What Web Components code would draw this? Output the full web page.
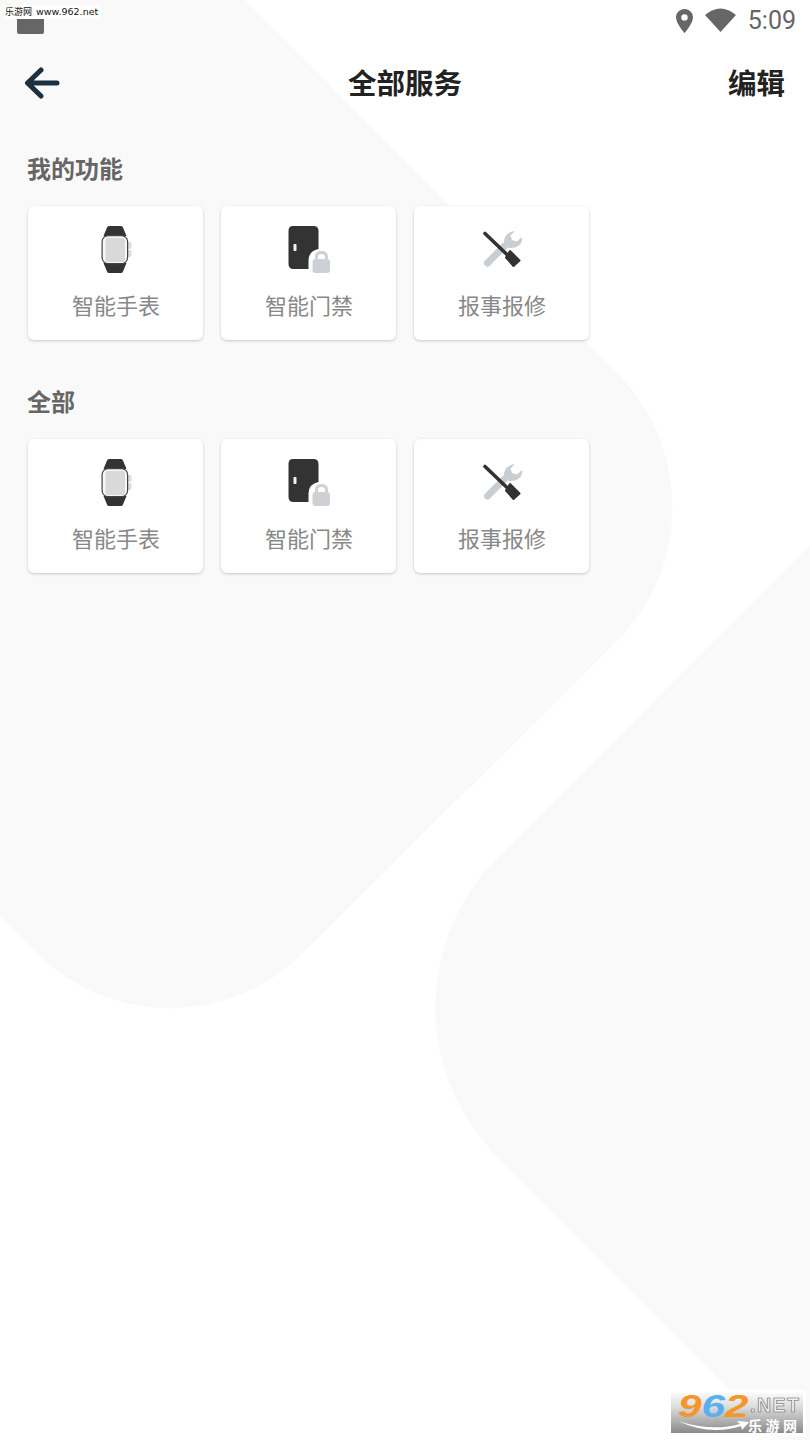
<!DOCTYPE html>
<html lang="zh">
<head>
<meta charset="utf-8">
<title>全部服务</title>
<style>
html, body {
	margin: 0;
	padding: 0;
	background: #fff;
}
body {
	font-family: "Noto Sans CJK SC", "Noto Sans", sans-serif;
}
</style>
</head>
<body>
<service-page>
	<status-bar></status-bar>
	<nav-header title="全部服务" action="编辑"></nav-header>
	<service-section heading="我的功能">
		<service-card icon="watch" label="智能手表"></service-card>
		<service-card icon="door" label="智能门禁"></service-card>
		<service-card icon="tools" label="报事报修"></service-card>
	</service-section>
	<service-section heading="全部">
		<service-card icon="watch" label="智能手表"></service-card>
		<service-card icon="door" label="智能门禁"></service-card>
		<service-card icon="tools" label="报事报修"></service-card>
	</service-section>
	<site-badge></site-badge>
</service-page>

<script>
const ICONS = {
	watch: `<svg width="36" height="48" viewBox="0 0 36 48">
		<path d="M5.500 11 L9 2.500 Q9.500 1 11 1 H23 Q24.500 1 25 2.500 L28.500 11 Z M5.500 38 H28.500 L25 46.500 Q24.500 48 23 48 H11 Q9.500 48 9 46.500 Z" fill="#333"/>
		<rect x="29" y="17" width="4.500" height="7" rx="1.800" fill="#ddd"/>
		<rect x="29" y="25" width="4.500" height="7" rx="1.800" fill="#ddd"/>
		<rect x="4.100" y="10.600" width="25.500" height="28" rx="6" fill="#f6f6f6" stroke="#444" stroke-width="1.200"/>
		<rect x="7.500" y="13" width="19.500" height="24" rx="2" fill="#d9d9d9"/>
	</svg>`,
	door: `<svg width="44" height="48" viewBox="0 0 44 48">
		<g transform="translate(0 1)">
			<path d="M6 0 H26.500 Q31.500 0 31.500 5 V23 Q21.500 25 21.500 34.500 V43 H6.500 Q1.500 43 1.500 38 V5 Q1.500 0 6 0 Z" fill="#333"/>
			<rect x="6.500" y="18" width="3" height="7" rx="0.800" fill="#f2f2f2"/>
			<path d="M29.500 36 V31 Q29.500 26.500 34.500 26.500 Q39.500 26.500 39.500 31 V36" fill="none" stroke="#cdd1d5" stroke-width="3"/>
			<rect x="25.500" y="33" width="17.500" height="14" rx="3" fill="#cdd1d5"/>
		</g>
	</svg>`,
	tools: `<svg width="44" height="40" viewBox="-2 0 44 40">
		<path d="M5.500 34 L22 17.500" stroke="#c9ced3" stroke-width="7" stroke-linecap="round"/>
		<path d="M22 17 Q21 7 27 4 Q29 2.500 33 2 L28.500 6.500 L30 11 L35 12.500 L40 8 Q41 13 37 16.500 Q33 19.500 27 19 Z" fill="#c9ced3"/>
		<path d="M3 4.500 L25.500 26" stroke="#333" stroke-width="3.600" stroke-linecap="round"/>
		<path d="M28 22 L37.500 31.500 L31.500 37 L24 28.500 Z" fill="#333" stroke="#333" stroke-width="2" stroke-linejoin="round"/>
	</svg>`
};

const pageTemplate = document.createElement('template');
pageTemplate.innerHTML = `
<style>
:host {
	display: block;
	position: relative;
	width: 810px;
	height: 1440px;
	overflow: hidden;
	background: #fff;
}
.shapes {
	position: absolute;
	left: 0;
	top: 0;
}
.content {
	position: relative;
	display: flex;
	flex-direction: column;
	height: 100%;
}
</style>
<svg class="shapes" width="810" height="1440" viewBox="0 0 810 1440">
	<path d="M0 0 H245 L617 373 A190 190 0 0 1 617 641 L303 953 A188 188 0 0 1 37 953 L0 916 Z" fill="#f9f9f9"/>
	<path d="M810 545 L497 858.500 A211 211 0 0 0 497 1156.500 L810 1470 Z" fill="#f9f9f9"/>
</svg>
<div class="content"><slot></slot></div>
`;

class ServicePage extends HTMLElement {
	constructor() {
		super();
		this.attachShadow({ mode: 'open' });
		this.shadowRoot.appendChild(pageTemplate.content.cloneNode(true));
	}
}

const statusTemplate = document.createElement('template');
statusTemplate.innerHTML = `
<style>
:host {
	display: flex;
	position: relative;
	height: 42px;
	align-items: center;
	justify-content: flex-end;
	padding: 0 14px 0 0;
	color: #666;
	font-family: Roboto, "Liberation Sans", sans-serif;
}
.stamp {
	position: absolute;
	left: 4px;
	top: 5px;
	width: 96px;
	height: 14px;
	padding-left: 1px;
	background: #fff;
	color: #111;
	font: 9.500px/14px "DejaVu Sans", sans-serif;
	white-space: nowrap;
}
.stamp span {
	margin-right: 4px;
	font: 9px/14px "Noto Sans CJK SC", sans-serif;
}
.notch {
	position: absolute;
	left: 17px;
	top: 19px;
	width: 27px;
	height: 15px;
	background: #666;
	border-radius: 0 0 2px 2px;
}
.pin {
	margin-right: 12px;
}
.wifi {
	margin-right: 12px;
	margin-top: -2px;
}
.time {
	font-size: 25px;
	line-height: 44px;
}
</style>
<div class="notch"></div>
<div class="stamp"><span>乐游网</span>www.962.net</div>
<svg class="pin" width="17" height="24" viewBox="0 0 17 24">
	<path fill-rule="evenodd" d="M8.500 0 C3.800 0 0 3.700 0 8.400 C0 14.200 8.500 24 8.500 24 C8.500 24 17 14.200 17 8.400 C17 3.700 13.200 0 8.500 0 Z M8.500 5.200 A3.200 3.200 0 1 1 8.500 11.600 A3.200 3.200 0 1 1 8.500 5.200 Z" fill="#666"/>
</svg>
<svg class="wifi" width="31" height="24" viewBox="0 0 31 24">
	<path d="M0 7 Q15.500 -6 31 7 L15.500 24 Z" fill="#666"/>
</svg>
<span class="time">5:09</span>
`;

class StatusBar extends HTMLElement {
	constructor() {
		super();
		this.attachShadow({ mode: 'open' });
		this.shadowRoot.appendChild(statusTemplate.content.cloneNode(true));
	}
}

const headerTemplate = document.createElement('template');
headerTemplate.innerHTML = `
<style>
:host {
	display: grid;
	grid-template-columns: 1fr auto 1fr;
	align-items: center;
	height: 82px;
	padding: 0 25px;
	color: #222;
	font-size: 28.500px;
	font-weight: 700;
}
.title, .action {
	padding-bottom: 4px;
}
.action {
	text-align: right;
}
svg {
	display: block;
}
</style>
<svg width="36" height="34" viewBox="0 0 36 34">
	<path d="M32 17 H3 M16 4 L2.500 17 L16 30" fill="none" stroke="#1c3040" stroke-width="5" stroke-linecap="round" stroke-linejoin="round"/>
</svg>
<span class="title"></span>
<span class="action"></span>
`;

class NavHeader extends HTMLElement {
	constructor() {
		super();
		this.attachShadow({ mode: 'open' });
		this.shadowRoot.appendChild(headerTemplate.content.cloneNode(true));
		this.shadowRoot.querySelector('.title').textContent = this.getAttribute('title');
		this.shadowRoot.querySelector('.action').textContent = this.getAttribute('action');
	}
}

const sectionTemplate = document.createElement('template');
sectionTemplate.innerHTML = `
<style>
:host {
	display: block;
	padding: 24px 28px 17px 27px;
}
h2 {
	margin: 0 0 18px;
	font-size: 24px;
	line-height: 40px;
	font-weight: 700;
	color: #666;
}
.grid {
	display: grid;
	grid-template-columns: repeat(3, 175px);
	gap: 18px;
	padding-left: 1px;
}
</style>
<h2></h2>
<div class="grid"><slot></slot></div>
`;

class ServiceSection extends HTMLElement {
	constructor() {
		super();
		this.attachShadow({ mode: 'open' });
		this.shadowRoot.appendChild(sectionTemplate.content.cloneNode(true));
		this.shadowRoot.querySelector('h2').textContent = this.getAttribute('heading');
	}
}

const cardTemplate = document.createElement('template');
cardTemplate.innerHTML = `
<style>
:host {
	display: flex;
	flex-direction: column;
	align-items: center;
	height: 134px;
	box-sizing: border-box;
	padding-top: 19px;
	background: #fff;
	border-radius: 6px;
	box-shadow: 0 1px 3px rgba(0, 0, 0, 0.2);
}
.icon {
	display: flex;
	align-items: center;
	justify-content: center;
	height: 48px;
}
svg {
	display: block;
}
.label {
	margin-top: 13px;
	padding-left: 1px;
	font-size: 22px;
	line-height: 36px;
	color: #888;
}
</style>
<div class="icon"></div>
<div class="label"></div>
`;

class ServiceCard extends HTMLElement {
	constructor() {
		super();
		this.attachShadow({ mode: 'open' });
		this.shadowRoot.appendChild(cardTemplate.content.cloneNode(true));
		this.shadowRoot.querySelector('.icon').innerHTML = ICONS[this.getAttribute('icon')];
		this.shadowRoot.querySelector('.label').textContent = this.getAttribute('label');
	}
}

const badgeTemplate = document.createElement('template');
badgeTemplate.innerHTML = `
<style>
:host {
	position: absolute;
	left: 671px;
	top: 1393px;
	width: 132px;
	height: 40px;
	background: linear-gradient(#fafafa 0%, #dcdcdc 35%, #8a8a8a 100%);
	box-shadow: 0 0 0 3px #fff;
}
.num {
	position: absolute;
	left: 7px;
	top: 0;
	font: italic 700 32px/26px "Liberation Sans", sans-serif;
	color: #f5962a;
	transform: scaleX(1.320);
	transform-origin: left top;
}
.num b {
	color: #5ab0ee;
	font-weight: 700;
}
.net {
	position: absolute;
	left: 79px;
	top: 3px;
	font: 700 19.500px/19px "Liberation Sans", sans-serif;
	letter-spacing: 1.500px;
	color: #f0f0f0;
	-webkit-text-stroke: 0.600px #666;
}
.cn {
	position: absolute;
	left: 77px;
	top: 25px;
	font: 700 14px/15px "Noto Sans CJK SC", sans-serif;
	letter-spacing: 3.500px;
	color: #fff;
}
svg {
	position: absolute;
	left: 7px;
	top: 26px;
}
</style>
<svg width="72" height="14" viewBox="0 0 72 14">
	<path d="M0 2 Q34 13 62 5 L59 2 L71 3 L64 11 L63 7 Q32 17 0 2 Z" fill="#fff"/>
</svg>
<span class="num">9<b>6</b>2</span>
<span class="net">.NET</span>
<span class="cn">乐游网</span>
`;

class SiteBadge extends HTMLElement {
	constructor() {
		super();
		this.attachShadow({ mode: 'open' });
		this.shadowRoot.appendChild(badgeTemplate.content.cloneNode(true));
	}
}

customElements.define('service-page', ServicePage);
customElements.define('status-bar', StatusBar);
customElements.define('nav-header', NavHeader);
customElements.define('service-section', ServiceSection);
customElements.define('service-card', ServiceCard);
customElements.define('site-badge', SiteBadge);
</script>
</body>
</html>
